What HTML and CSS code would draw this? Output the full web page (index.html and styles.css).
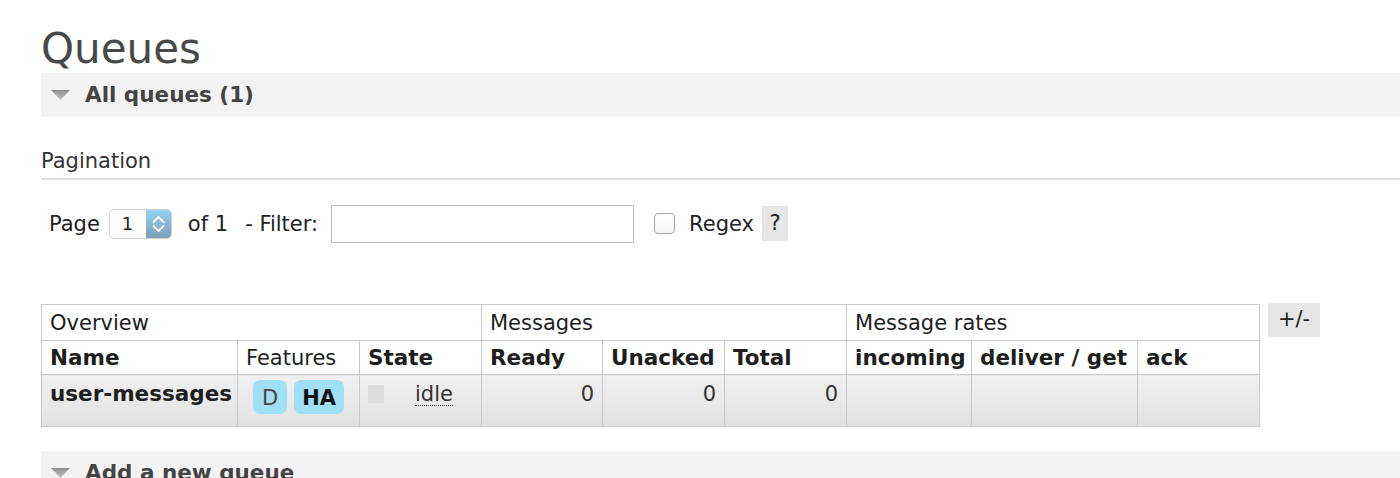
FILE: index.html
```html
<!DOCTYPE html>
<html lang="en">
<head>
<meta charset="utf-8">
<title>Queues</title>
<link rel="stylesheet" href="styles.css">
</head>
<body>
<div class="page">
  <h1 class="title">Queues</h1>

  <div class="section">
    <div class="section-head">
      <svg class="tri" width="19" height="10" viewBox="0 0 19 10"><defs><linearGradient id="tg" x1="0" y1="0" x2="0" y2="1"><stop offset="0" stop-color="#8f8f8f"/><stop offset="1" stop-color="#c4c4c4"/></linearGradient></defs><polygon points="0,0 19,0 9.5,10" fill="url(#tg)"/></svg>
      <h2>All queues (1)</h2>
    </div>
    <div class="section-body">
      <h3 class="subhead">Pagination</h3>
      <div class="pager">
        <span class="lbl-page">Page</span>
        <span class="select">
          <span class="select-val">1</span>
          <span class="spin"><svg width="25" height="28" viewBox="0 0 25 28"><path d="M7.5 12 L12.5 7 L17.5 12" fill="none" stroke="#fff" stroke-width="1.8" stroke-linecap="round" stroke-linejoin="round"/><path d="M7.5 16 L12.5 21 L17.5 16" fill="none" stroke="#fff" stroke-width="1.8" stroke-linecap="round" stroke-linejoin="round"/></svg></span>
        </span>
        <span class="lbl-of">of 1</span>
        <span class="lbl-filter">- Filter:</span>
        <span class="filter-input"></span>
        <span class="checkbox"></span>
        <span class="lbl-regex">Regex</span>
        <span class="help">?</span>
      </div>

      <div class="table-wrap">
        <table class="grid">
          <colgroup>
            <col class="c-name"><col class="c-feat"><col class="c-state">
            <col class="c-ready"><col class="c-unack"><col class="c-total">
            <col class="c-in"><col class="c-deliver"><col class="c-ack">
          </colgroup>
          <thead>
            <tr class="group">
              <th colspan="3">Overview</th>
              <th colspan="3">Messages</th>
              <th colspan="3">Message rates</th>
            </tr>
            <tr class="cols">
              <th>Name</th>
              <th class="plain">Features</th>
              <th>State</th>
              <th>Ready</th>
              <th>Unacked</th>
              <th>Total</th>
              <th>incoming</th>
              <th>deliver / get</th>
              <th>ack</th>
            </tr>
          </thead>
          <tbody>
            <tr class="row">
              <td class="name">user-messages</td>
              <td class="feat"><span class="badge">D</span><span class="badge strong">HA</span></td>
              <td class="state"><span class="state-box"></span><span class="idle">idle</span></td>
              <td class="num">0</td>
              <td class="num">0</td>
              <td class="num">0</td>
              <td></td>
              <td></td>
              <td></td>
            </tr>
          </tbody>
        </table>
        <span class="toggle">+/-</span>
      </div>
    </div>
  </div>

  <div class="section section-add">
    <div class="section-head">
      <svg class="tri" width="19" height="10" viewBox="0 0 19 10"><defs><linearGradient id="tg2" x1="0" y1="0" x2="0" y2="1"><stop offset="0" stop-color="#8f8f8f"/><stop offset="1" stop-color="#c4c4c4"/></linearGradient></defs><polygon points="0,0 19,0 9.5,10" fill="url(#tg2)"/></svg>
      <h2>Add a new queue</h2>
    </div>
  </div>
</div>
</body>
</html>
```

FILE: styles.css
```css
* { box-sizing: border-box; }

html, body { height: 100%; }

body {
  margin: 0;
  background: #fff;
  color: #222;
  font-family: "DejaVu Sans", Verdana, sans-serif;
  overflow: hidden;
}

.page {
  padding-left: 41px;
}

.title {
  margin: 0;
  height: 73px;
  padding-top: 25px;
  font-size: 42px;
  line-height: 47px;
  font-weight: normal;
  color: #484848;
}

.section-head {
  display: flex;
  align-items: center;
  gap: 15px;
  height: 44px;
  padding-left: 10px;
  background: #f3f3f3;
}

.section-head h2 {
  margin: 0;
  font-size: 21.5px;
  line-height: 44px;
  font-weight: bold;
  color: #444;
  white-space: nowrap;
}

.subhead {
  margin: 32px 0 0;
  padding-bottom: 5px;
  font-size: 21px;
  line-height: 24px;
  font-weight: normal;
  color: #333;
  border-bottom: 2px solid #e2e2e2;
}

.pager {
  display: flex;
  align-items: center;
  height: 37px;
  margin-top: 25px;
  padding-left: 8px;
  font-size: 21px;
  line-height: 24px;
  color: #222;
}

.select {
  display: flex;
  width: 63px;
  height: 30px;
  margin-left: 9px;
  border: 1px solid #cfcfcf;
  border-radius: 5px;
  overflow: hidden;
  background: #fff;
}

.select-val {
  flex: 1;
  padding-left: 12px;
  font-size: 18px;
  line-height: 28px;
}

.spin {
  display: flex;
  width: 25px;
  background: linear-gradient(#93d3f0, #7f9fb6);
}

.lbl-of { margin-left: 16px; }
.lbl-filter { margin-left: 17px; }

.filter-input {
  width: 303px;
  height: 38px;
  margin-left: 13px;
  border: 1px solid #bdbdbd;
  background: #fff;
}

.checkbox {
  width: 21px;
  height: 21px;
  margin-left: 20px;
  border: 1px solid #a6a6a6;
  border-radius: 4px;
  background: linear-gradient(#fff, #f4f4f4);
}

.lbl-regex { margin-left: 14px; }

.help {
  width: 26px;
  height: 35px;
  margin-left: 8px;
  background: #e6e6e6;
  text-align: center;
  line-height: 35px;
}

.table-wrap {
  display: flex;
  align-items: flex-start;
  gap: 8px;
  margin-top: 62px;
}

.grid {
  width: 1218px;
  border-collapse: collapse;
  table-layout: fixed;
  font-size: 21px;
  line-height: 24px;
  color: #1e1e1e;
}

.c-name { width: 196px; }
.c-feat { width: 122px; }
.c-state { width: 122px; }
.c-ready { width: 121px; }
.c-unack { width: 122px; }
.c-total { width: 122px; }
.c-in { width: 125px; }
.c-deliver { width: 166px; }
.c-ack { width: 122px; }

.grid th,
.grid td {
  border: 1px solid #c9c9c9;
  padding: 0 8px;
  text-align: left;
  vertical-align: top;
  white-space: nowrap;
}

.group th {
  height: 36px;
  padding-top: 6px;
  font-weight: normal;
}

.cols th {
  height: 34px;
  padding-top: 5px;
  font-weight: bold;
  font-size: 21.5px;
}

.cols th.plain {
  font-weight: normal;
  font-size: 21px;
}

.row td {
  height: 52px;
  padding-top: 7px;
  background: linear-gradient(#f0f0f0, #e2e2e2);
  color: #333;
}

.row td.name {
  font-weight: bold;
  font-size: 21.5px;
  color: #1e1e1e;
}

.row td.feat {
  text-align: center;
  padding-left: 0;
  padding-right: 0;
}

.badge {
  display: inline-block;
  height: 34px;
  margin-top: -2px;
  padding: 3px 9px 0;
  line-height: 30px;
  border-radius: 7px;
  background: #9fe0f7;
  color: #444;
  vertical-align: top;
}

.badge + .badge { margin-left: 7px; }

.badge.strong {
  padding: 3px 8px 0;
  font-weight: bold;
  color: #111;
}

.state-box {
  display: inline-block;
  width: 16px;
  height: 18px;
  margin-top: 3px;
  background: #dcdcdc;
  vertical-align: top;
}

.idle {
  display: inline-block;
  margin-left: 31px;
  border-bottom: 1px dotted #333;
  line-height: 22px;
}

.row td.num { text-align: right; }

.toggle {
  width: 52px;
  height: 34px;
  margin-top: -1px;
  background: #e6e6e6;
  text-align: center;
  font-size: 21px;
  line-height: 32px;
  color: #222;
}

.section-add {
  margin-top: 24px;
}
```
